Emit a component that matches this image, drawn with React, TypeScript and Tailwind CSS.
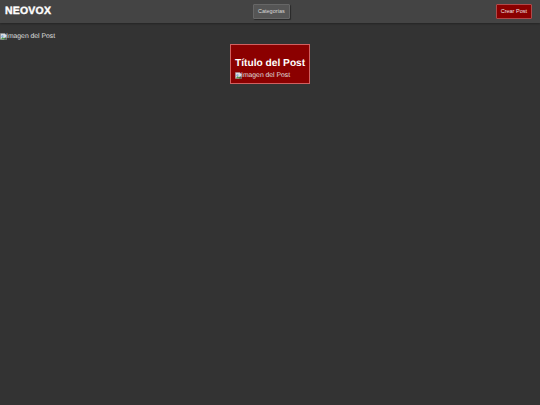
import React from "react";

function BrokenImage() {
  return (
    <svg width="7" height="7" viewBox="0 0 16 16" className="-mr-[1px] shrink-0">
      <path d="M1 1h10l4 4v10H1z" fill="#e4e8ea" stroke="#9a9ea2" strokeWidth="1" />
      <path d="M2 14l4-5 3 3 2-2 3 4z" fill="#4e9a4a" />
      <path d="M2 9l3-5 4 3-3 3z" fill="#8db7e8" />
      <path d="M9 15l6-8v8z" fill="#333333" opacity="0.7" />
    </svg>
  );
}

function PostImage() {
  return (
    <div className="flex items-center pt-[1px] text-[6.8px] leading-[9px] text-[#e6e6e6] opacity-95">
      <BrokenImage />
      <span>Imagen del Post</span>
    </div>
  );
}

export default function App() {
  return (
    <div className="min-h-screen bg-[#333333] font-['Liberation_Sans',Arial,sans-serif] text-white [text-rendering:geometricPrecision]">
      <header className="flex h-[23px] items-center justify-between bg-[#444444] pl-[5px] pr-2 shadow-[0_1px_2px_rgba(0,0,0,0.3)]">
        <div className="text-[10.5px] font-bold tracking-[0.2px] [-webkit-text-stroke:0.4px_white]">NEOVOX</div>
        <button className="-ml-[4px] h-[15px] rounded-[1px] border border-[#666666] bg-[#555555] px-1 text-[5.5px] text-[#d8d8d8] shadow-[1px_1px_1px_rgba(0,0,0,0.4)]">
          Categorías
        </button>
        <button className="h-[15px] rounded-[1px] border border-[#b04a4a] bg-[#8b0000] px-1 text-[5.5px] text-[#f0e0e0]">
          Crear Post
        </button>
      </header>
      <main>
        <div className="pt-2">
          <PostImage />
        </div>
        <div className="flex justify-center pt-[3px]">
          <article className="h-[40px] w-[80px] border border-[#d06060] bg-[#8b0000] px-1 pt-[12px]">
            <h2 className="whitespace-nowrap text-[10.2px] font-bold leading-[13px]">Título del Post</h2>
            <PostImage />
          </article>
        </div>
      </main>
    </div>
  );
}
